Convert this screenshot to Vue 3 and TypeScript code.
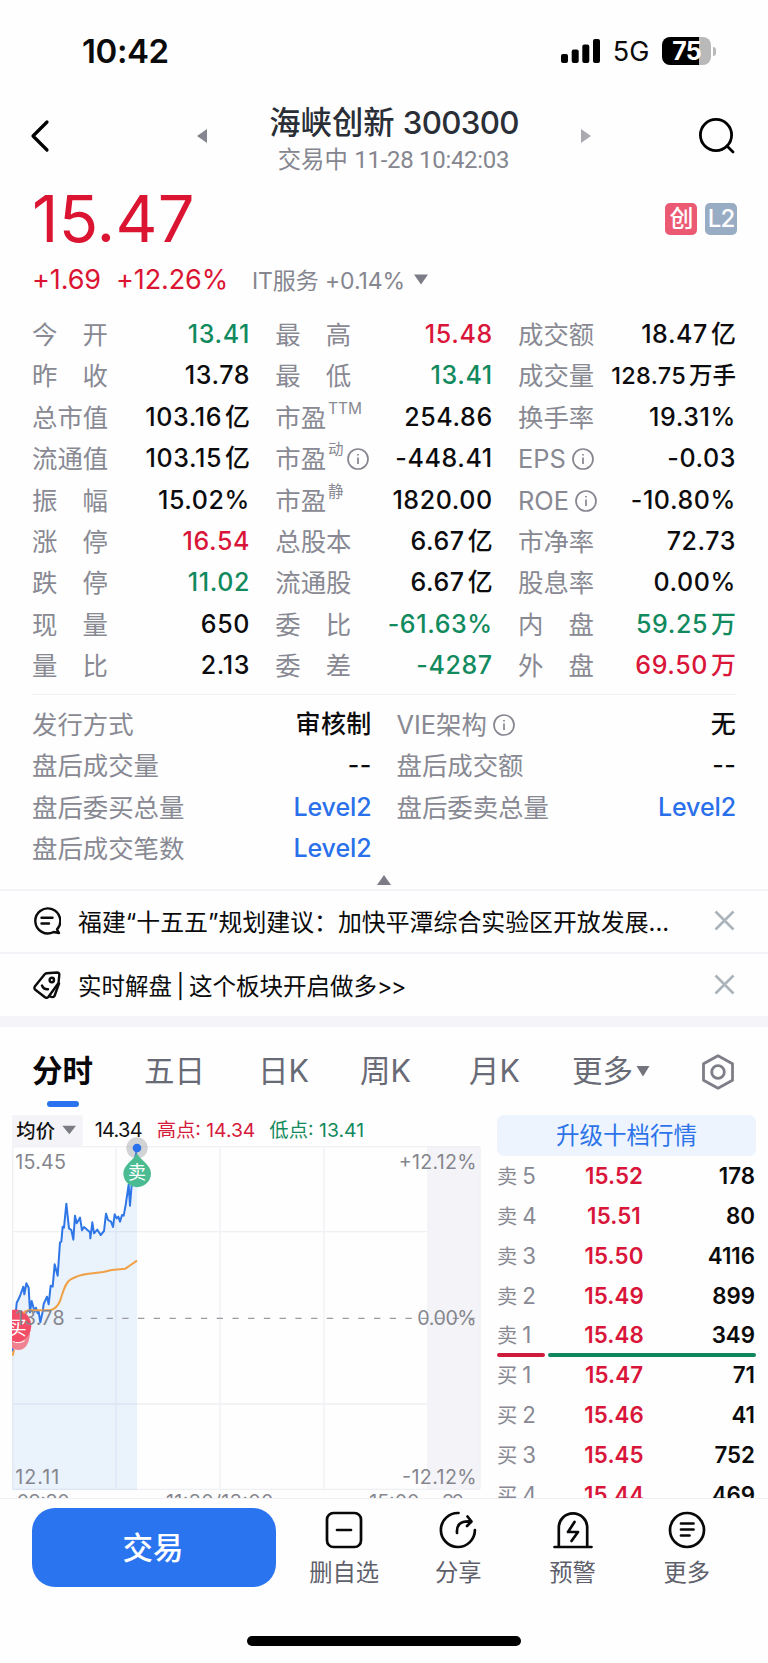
<script setup lang="ts">
type Tone = 'up' | 'down' | 'flat' | 'link'

interface Stat {
  label: string
  value: string
  unit?: string
  sup?: string
  info?: boolean
  tone?: Tone
  small?: boolean
}

interface Level {
  side: string
  price: string
  volume: string
}

const stats: Stat[] = [
  { label: '今开', value: '13.41', tone: 'down' },
  { label: '最高', value: '15.48', tone: 'up' },
  { label: '成交额', value: '18.47', unit: '亿' },
  { label: '昨收', value: '13.78' },
  { label: '最低', value: '13.41', tone: 'down' },
  { label: '成交量', value: '128.75', unit: '万手', small: true },
  { label: '总市值', value: '103.16', unit: '亿' },
  { label: '市盈', sup: 'TTM', value: '254.86' },
  { label: '换手率', value: '19.31%' },
  { label: '流通值', value: '103.15', unit: '亿' },
  { label: '市盈', sup: '动', info: true, value: '-448.41' },
  { label: 'EPS', info: true, value: '-0.03' },
  { label: '振幅', value: '15.02%' },
  { label: '市盈', sup: '静', value: '1820.00' },
  { label: 'ROE', info: true, value: '-10.80%' },
  { label: '涨停', value: '16.54', tone: 'up' },
  { label: '总股本', value: '6.67', unit: '亿' },
  { label: '市净率', value: '72.73' },
  { label: '跌停', value: '11.02', tone: 'down' },
  { label: '流通股', value: '6.67', unit: '亿' },
  { label: '股息率', value: '0.00%' },
  { label: '现量', value: '650' },
  { label: '委比', value: '-61.63%', tone: 'down' },
  { label: '内盘', value: '59.25', unit: '万', tone: 'down' },
  { label: '量比', value: '2.13' },
  { label: '委差', value: '-4287', tone: 'down' },
  { label: '外盘', value: '69.50', unit: '万', tone: 'up' },
]

const extras: Stat[] = [
  { label: '发行方式', value: '审核制' },
  { label: 'VIE架构', info: true, value: '无' },
  { label: '盘后成交量', value: '--' },
  { label: '盘后成交额', value: '--' },
  { label: '盘后委买总量', value: 'Level2', tone: 'link' },
  { label: '盘后委卖总量', value: 'Level2', tone: 'link' },
  { label: '盘后成交笔数', value: 'Level2', tone: 'link' },
]

const tabs: string[] = ['分时', '五日', '日K', '周K', '月K']

const asks: Level[] = [
  { side: '卖5', price: '15.52', volume: '178' },
  { side: '卖4', price: '15.51', volume: '80' },
  { side: '卖3', price: '15.50', volume: '4116' },
  { side: '卖2', price: '15.49', volume: '899' },
  { side: '卖1', price: '15.48', volume: '349' },
]

const bids: Level[] = [
  { side: '买1', price: '15.47', volume: '71' },
  { side: '买2', price: '15.46', volume: '41' },
  { side: '买3', price: '15.45', volume: '752' },
  { side: '买4', price: '15.44', volume: '469' },
]

const pricePoints =
  '38,740 44,660 50,594 60,573 70,545 73,568 79,535 86,548 90,622 95,588 104,620 108,608 113,625 116,620 121,652 128,620 131,597 141,575 146,598 152,542 158,545 164,478 173,512 180,412 184,410 188,365 192,368 199,296 207,370 214,375 220,404 225,332 230,355 240,338 246,376 252,366 270,382 271,400 277,352 282,385 292,374 302,390 312,378 318,326 324,345 333,350 339,366 344,328 350,340 355,335 360,350 366,330 371,332 377,300 386,238 390,302 397,215 404,170 411,128'

const isPair = (label: string): boolean => label.length === 2
</script>

<template>
  <div class="page">
    <header class="status">
      <span class="clock">10:42</span>
      <div class="status-right">
        <svg class="signal" viewBox="0 0 39 24">
          <rect x="0" y="15" width="7" height="9" rx="2" />
          <rect x="10.7" y="10.5" width="7" height="13.5" rx="2" />
          <rect x="21.3" y="5.5" width="7" height="18.5" rx="2" />
          <rect x="32" y="0" width="7" height="24" rx="2" />
        </svg>
        <span class="net">5G</span>
        <div class="battery"><span>75</span></div>
        <i class="nub"></i>
      </div>
    </header>

    <nav class="titlebar">
      <svg class="back" viewBox="0 0 22 34"><path d="M18 3 4 17l14 14" /></svg>
      <i class="tri-left"></i>
      <div class="title">
        <h1>海峡创新 <b>300300</b></h1>
        <p>交易中 <span>11-28 10:42:03</span></p>
      </div>
      <i class="tri-right"></i>
      <svg class="search" viewBox="0 0 38 38"><circle cx="18" cy="18" r="15.6" /><path d="m29 29 6 6" /></svg>
    </nav>

    <section class="quote">
      <div class="quote-top">
        <strong>15.47</strong>
        <div class="badges"><span class="b-red">创</span><span class="b-blue">L2</span></div>
      </div>
      <div class="quote-sub">
        <span class="chg">+1.69</span>
        <span class="pct">+12.26%</span>
        <span class="sector">IT服务 <em>+0.14%</em></span>
        <svg class="caret" viewBox="0 0 16 11"><path d="M1 .5h14L8 10.5z" /></svg>
      </div>
    </section>

    <section class="stats">
      <div v-for="(s, i) in stats" :key="i" class="stat">
        <span class="label" :class="{ pair: isPair(s.label) && !s.sup }"
          >{{ s.label }}<sup v-if="s.sup">{{ s.sup }}</sup
          ><svg v-if="s.info" class="info" :class="{ gap: !s.sup }" viewBox="0 0 22 22"><circle cx="11" cy="11" r="10" /><path d="M11 9.5v6.5M11 6v1.6" /></svg
        ></span>
        <span class="value" :class="[s.tone, { small: s.small }]">{{ s.value }}<i v-if="s.unit">{{ s.unit }}</i></span>
      </div>
    </section>

    <section class="extras">
      <div v-for="s in extras" :key="s.label" class="stat">
        <span class="label">{{ s.label }}<svg v-if="s.info" class="info gap" viewBox="0 0 22 22"><circle cx="11" cy="11" r="10" /><path d="M11 9.5v6.5M11 6v1.6" /></svg></span>
        <span class="value" :class="s.tone">{{ s.value }}</span>
      </div>
    </section>
    <div class="fold"><svg viewBox="0 0 14 10"><path d="M7 0l7 10H0z" /></svg></div>

    <section class="notice">
      <svg class="n-icon" viewBox="0 0 28 28"><path d="M24 22.4A12.5 12.5 0 1 0 20.6 25L26 26Z" /><path d="M8.5 10.7h11M8.5 16.5h7.5" /></svg>
      <span>福建“十五五”规划建议：加快平潭综合实验区开放发展...</span>
      <svg class="close" viewBox="0 0 21 21"><path d="m1.5 1.5 18 18m0-18-18 18" /></svg>
    </section>
    <section class="notice second">
      <svg class="n-icon" viewBox="0 0 28 28">
        <path d="M13.7 2.2 24 1.5q2.5 0 2.3 2.5L25.5 12 15.5 25.8q-1.5 1.7-3.5.5L2.3 18.8q-1.5-1.5-.5-3.2L11.5 3.5q1-1.2 2.2-1.3Z" />
        <circle cx="18.8" cy="9" r="2.2" /><path d="M9 14.5q1.5 4 6 3.7M26 12.5 21.5 25q-1.5 2-4.5.5" />
      </svg>
      <span class="n-two">实时解盘 | 这个板块开启做多<em>&gt;&gt;</em></span>
      <svg class="close" viewBox="0 0 21 21"><path d="m1.5 1.5 18 18m0-18-18 18" /></svg>
    </section>
    <div class="band"></div>

    <nav class="tabs">
      <span v-for="(t, i) in tabs" :key="t" class="tab" :class="{ on: i === 0 }">{{ t }}</span>
      <span class="tab more">更多<svg class="mini" viewBox="0 0 14 12"><path d="M.5 1h13L7 11.5z" /></svg></span>
      <svg class="gear" viewBox="0 0 34 36"><path d="M17 1.8 31.5 9.8v16.4L17 34.2 2.5 26.2V9.8Z" /><circle cx="17" cy="18" r="6.3" /></svg>
    </nav>

    <main class="market">
      <div class="chart-wrap">
        <svg class="chart" viewBox="36 30 1410 1152">
          <rect x="1281" y="124" width="159" height="1031" fill="#f4f4f8" />
          <path class="grid" d="M38 125H1440M38 380H1281M38 897H1281M38 1153H1440M38 125V1153M348 125V1153M660 125V1153M972 125V1153M1440 125V1153" />
          <polygon class="area" :points="`${pricePoints} 411,1155 37,1155 37,740`" />
          <path class="dash" d="M200 640H1430" />
          <rect x="36" y="30" width="212" height="93" rx="6" fill="#f4f4f8" />
          <path d="M187 62h41l-20 26z" fill="#7b7b84" />
          <polyline class="price" :points="pricePoints" />
          <circle cx="411" cy="129" r="32" fill="#8c8f94" opacity=".38" />
          <path d="M411 145C420 166 453 179 453 205A41 41 0 0 1 370 205C370 179 402 166 411 145Z" fill="#4bbb92" />
          <circle cx="411" cy="129" r="13" fill="#2970ec" />
          <path d="M36 630Q78 640 90 685Q86 735 55 735Q42 735 36 730Z" fill="#f08291" />
          <path d="M36 615Q48 611 62 616A50 50 0 0 1 60 710Q48 714 36 711Z" fill="#f34c66" />
          <path d="M38 709q18 9 36-2" fill="none" stroke="#fff" stroke-width="3" />
          <svg x="36" y="600" width="70" height="125" viewBox="0 0 70 125"><text x="-13" y="89" font-size="57" fill="#fff">买</text></svg>
          <path class="average" d="M38 752 42 735M70 625Q76 617 86 616L150 616Q170 612 180 588C190 560 195 532 212 523Q235 510 260 507L310 501 335 495 376 491 392 480 411 467" />
          <text x="411" y="223" font-size="54" fill="#fff" text-anchor="middle">卖</text>
          <text x="49" y="98" font-size="58" font-weight="500" fill="#111">均价</text>
          <text x="284" y="97" font-size="60" fill="#111" textLength="144">14.34</text>
          <text x="470" y="97" font-size="58" fill="#d61a3b" textLength="296">高点: 14.34</text>
          <text x="808" y="97" font-size="58" fill="#12895c" textLength="284">低点: 13.41</text>
          <g class="axis">
            <text x="46" y="191" textLength="152">15.45</text>
            <text x="46" y="661" textLength="148">13.78</text>
            <text x="46" y="1137" textLength="132">12.11</text>
            <text x="1430" y="191" text-anchor="end" textLength="234">+12.12%</text>
            <text x="1430" y="661" text-anchor="end" textLength="178">0.00%</text>
            <text x="1430" y="1137" text-anchor="end" textLength="224">-12.12%</text>
            <text x="50" y="1212" textLength="159">09:30</text>
            <text x="498" y="1212" textLength="322">11:30/13:00</text>
            <text x="1108" y="1212" textLength="150">15:00</text>
            <text x="1326" y="1212" textLength="66">30</text>
          </g>
        </svg>
      </div>
      <aside class="book">
        <div class="upgrade">升级十档行情</div>
        <div v-for="l in asks" :key="l.side" class="level">
          <span class="side">{{ l.side[0] }}<b>{{ l.side[1] }}</b></span><span class="lp">{{ l.price }}</span><span class="lv">{{ l.volume }}</span>
        </div>
        <div class="ratio"><i class="r-up"></i><i class="r-down"></i></div>
        <div v-for="l in bids" :key="l.side" class="level">
          <span class="side">{{ l.side[0] }}<b>{{ l.side[1] }}</b></span><span class="lp">{{ l.price }}</span><span class="lv">{{ l.volume }}</span>
        </div>
      </aside>
    </main>

    <footer class="dock">
      <div class="actions">
        <button class="trade">交易</button>
        <div class="action">
          <svg viewBox="0 0 40 38"><rect x="3" y="2" width="34" height="34" rx="6.5" /><path d="M13 19h14" /></svg>
          <span>删自选</span>
        </div>
        <div class="action">
          <svg viewBox="0 0 40 38"><path d="M20.5 2A17 17 0 1 0 36.9 19M19 22Q18 10 31 10.3M29.5 5.5l4 5-4.5 4.5" /></svg>
          <span>分享</span>
        </div>
        <div class="action">
          <svg viewBox="0 0 40 38"><path d="M1.5 36h37M5.8 36V16.5A14.2 14.2 0 0 1 34.2 16.5V36M21.5 11 15 21h10l-6.5 9" /></svg>
          <span>预警</span>
        </div>
        <div class="action">
          <svg viewBox="0 0 40 38"><circle cx="20" cy="19" r="17" /><path d="M14 12.5h12.5M14 18.5h12.5M14 24.5h8.5" /></svg>
          <span>更多</span>
        </div>
      </div>
      <div class="home"></div>
    </footer>
  </div>
</template>

<style>
body {
  margin: 0;
  background: #fff;
}
</style>

<style scoped>
.page {
  width: 768px;
  height: 1663px;
  overflow: hidden;
  background: #fefefe;
  color: #0b0b0c;
  font-family: Inter, 'Noto Sans CJK SC', sans-serif;
  display: flex;
  flex-direction: column;
}
.page > * {
  flex: none;
  box-sizing: border-box;
}
i,
em {
  font-style: normal;
}
svg {
  display: block;
  fill: none;
  flex: none;
}
.status {
  height: 102px;
  padding: 0 52px 0 82px;
  display: flex;
  align-items: center;
  justify-content: space-between;
}
.clock {
  font-size: 33px;
  font-weight: 600;
  letter-spacing: -0.4px;
}
.status-right {
  display: flex;
  align-items: center;
}
.signal {
  width: 39px;
  height: 24px;
  fill: #000;
}
.net {
  width: 62px;
  text-align: center;
  font-size: 27px;
  line-height: 32px;
  padding-top: 2px;
}
.battery {
  width: 49px;
  height: 28px;
  border-radius: 8px;
  background: linear-gradient(90deg, #000 75%, #b9b9ba 75%);
  color: #fff;
  font-size: 25px;
  line-height: 28px;
  font-weight: 700;
  text-align: center;
  letter-spacing: -1px;
}
.nub {
  width: 3px;
  height: 9px;
  margin-left: 2px;
  border-radius: 0 5px 5px 0;
  background: #b9b9ba;
}
.titlebar {
  height: 78px;
  padding: 0 32px 10px 29px;
  display: flex;
  align-items: center;
}
.back {
  width: 22px;
  height: 34px;
  stroke: #000;
  stroke-width: 3.2;
  stroke-linecap: round;
  stroke-linejoin: round;
}
.tri-left {
  margin-left: 146px;
  border: 7px solid transparent;
  border-left: 0;
  border-right: 10px solid #85858f;
}
.title {
  width: 374px;
  padding-top: 8px;
  text-align: center;
  white-space: nowrap;
}
h1 {
  margin: 0;
  font-size: 31.3px;
  line-height: 40px;
  font-weight: 500;
  color: #2a2f37;
}
h1 b {
  font-weight: 500;
  letter-spacing: -0.7px;
}
.title p {
  margin: 0 0 0 -1px;
  font-size: 23.3px;
  line-height: 34px;
  color: #85868f;
}
.title p span {
  font-family: Roboto, sans-serif;
  font-size: 24px;
  letter-spacing: -0.3px;
}
.tri-right {
  border: 7px solid transparent;
  border-right: 0;
  border-left: 10px solid #aaaab0;
}
.search {
  width: 38px;
  height: 38px;
  margin-left: auto;
  stroke: #000;
  stroke-width: 2.8;
  stroke-linecap: round;
}
.quote {
  height: 134px;
  padding: 0 31px 0 32px;
}
.quote-top {
  height: 79px;
  display: flex;
  justify-content: space-between;
}
.quote-top strong {
  font-size: 65px;
  line-height: 78px;
  font-weight: 400;
  letter-spacing: 0.2px;
  color: #db1432;
}
.badges {
  margin-top: 23px;
  display: flex;
  gap: 8px;
}
.badges span {
  width: 32px;
  height: 32px;
  border-radius: 5px;
  color: #fff;
  font-size: 24px;
  line-height: 32px;
  text-align: center;
  font-weight: 500;
  letter-spacing: -1px;
}
.b-red {
  background: #eb5973;
}
.b-blue {
  background: #98acc3;
}
.quote-sub {
  height: 40px;
  display: flex;
  align-items: center;
  white-space: nowrap;
  color: #db1432;
  font-size: 27px;
  letter-spacing: -0.1px;
}
.chg {
  width: 84px;
}
.pct {
  width: 136px;
}
.sector {
  color: #85868f;
  font-size: 23px;
}
.caret {
  width: 16px;
  height: 11px;
  margin-left: 8px;
  fill: #7c7c86;
}
.stats {
  height: 381px;
  margin: 0 32px 0 32px;
  display: grid;
  grid-template-columns: 218px 217.5px 218px;
  column-gap: 25.25px;
  grid-auto-rows: 41.4px;
  border-bottom: 1px solid #f0f0f4;
}
.stat {
  display: flex;
  justify-content: space-between;
  line-height: 41px;
  white-space: nowrap;
}
.label {
  display: flex;
  font-size: 25.4px;
  font-weight: 400;
  color: #888993;
}
.stats .label.pair {
  width: 76px;
  display: block;
  text-align: justify;
  text-align-last: justify;
  text-justify: inter-character;
}
sup {
  margin-left: 2px;
  font-size: 15.5px;
  line-height: 24px;
}
.info {
  width: 22px;
  height: 22px;
  margin: 10px 0 0 3px;
  stroke: #85868f;
  stroke-width: 1.7;
}
.info.gap {
  margin-left: 6px;
}
.value {
  font-size: 25px;
  font-weight: 500;
  letter-spacing: 0.6px;
  color: #0c0c0e;
}
.value i {
  margin-left: 3px;
  letter-spacing: 0;
}
.value.small {
  font-size: 23.5px;
  letter-spacing: 0.3px;
}
.value.up {
  color: #d9163a;
}
.value.down {
  color: #118a5e;
}
.value.link {
  color: #2a70ea;
  letter-spacing: -0.1px;
}
.extras {
  height: 179px;
  margin: 0 32px 0 32px;
  padding-top: 9px;
  display: grid;
  grid-template-columns: 339.5px 339.5px;
  column-gap: 25px;
  grid-auto-rows: 41.3px;
}
.extras .value:not(.link) {
  letter-spacing: 0.3px;
}
.fold {
  height: 17px;
  border-bottom: 2px solid #f4f4f8;
}
.fold svg {
  width: 14px;
  height: 10px;
  margin: 1px auto 0;
  fill: #7c7c86;
}
.notice {
  height: 63px;
  padding: 0 33px 2px 33px;
  display: flex;
  align-items: center;
  border-bottom: 2px solid #f4f4f8;
  font-size: 23.9px;
  white-space: nowrap;
}
.notice.second {
  height: 62px;
  padding-bottom: 1px;
  border: 0;
}
.notice span {
  margin-left: 17px;
}
.n-two {
  font-size: 23.5px;
  word-spacing: -2px;
}
.n-two em {
  font-size: 23px;
  letter-spacing: -1.2px;
}
.n-icon {
  width: 28px;
  height: 28px;
  stroke: #0b0b0c;
  stroke-width: 2.4;
  stroke-linecap: round;
  stroke-linejoin: round;
}
.close {
  width: 21px;
  height: 21px;
  margin-left: auto;
  stroke: #aab4ba;
  stroke-width: 2.6;
}
.band {
  height: 11px;
  background: #f4f4f9;
}
.tabs {
  height: 88px;
  padding: 0 33px 0 32px;
  display: flex;
  color: #686a75;
}
.tab {
  position: relative;
  height: 80px;
  font-size: 30.5px;
  line-height: 88px;
  margin-right: 51px;
  white-space: nowrap;
}
.tab:nth-child(2) {
  margin-right: 53px;
}
.tab:nth-child(4) {
  margin-right: 58px;
}
.tab.on {
  color: #08080a;
  font-weight: 600;
}
.tab.on::after {
  content: '';
  position: absolute;
  left: 15px;
  bottom: 0;
  width: 32px;
  height: 6px;
  border-radius: 3px;
  background: #2b73ee;
}
.tab.more {
  margin: 0 0 0 1px;
  display: flex;
}
.mini {
  width: 14px;
  height: 12px;
  margin: 38px 0 0 3px;
  fill: #74747e;
}
.gear {
  width: 34px;
  height: 36px;
  margin: 27px 0 0 auto;
  stroke: #7d7e87;
  stroke-width: 2.8;
  stroke-linejoin: round;
}
.market {
  height: 383px;
  overflow: hidden;
  padding: 0 12px;
  display: flex;
  justify-content: space-between;
}
.chart-wrap,
.chart {
  width: 470px;
  height: 384px;
}
.grid {
  stroke: #eff0f4;
  stroke-width: 4;
}
.area {
  fill: #5c9cee;
  fill-opacity: 0.12;
}
.price {
  stroke: #2f76e6;
  stroke-width: 6;
  stroke-linejoin: round;
}
.average {
  stroke: #f0a045;
  stroke-width: 6;
}
.dash {
  stroke: #9b9ca1;
  stroke-width: 4;
  stroke-dasharray: 19 28.2;
  stroke-dashoffset: 22;
}
.axis {
  fill: #85868d;
  font-size: 59px;
}
.book {
  width: 259px;
}
.upgrade {
  height: 41px;
  border-radius: 7px;
  background: #edf4fd;
  color: #2d74ea;
  font-size: 23.5px;
  line-height: 41px;
  text-align: center;
}
.level {
  height: 39.85px;
  padding-right: 1px;
  line-height: 39.5px;
  display: grid;
  grid-template-columns: 78px 78px 1fr;
  font-size: 22.3px;
  font-weight: 600;
}
.side {
  font-size: 20.3px;
  font-weight: 400;
  color: #888993;
}
.side b {
  margin-left: 5px;
  font-size: 22.3px;
  font-weight: 400;
}
.lp {
  color: #d9163a;
  text-align: center;
  letter-spacing: 0.1px;
}
.lv {
  text-align: right;
}
.ratio {
  height: 4px;
  margin: -2px 0 -2px;
  display: flex;
  gap: 3px;
}
.r-up {
  width: 48px;
  border-radius: 2px;
  background: #cf1c3c;
}
.r-down {
  flex: 1;
  border-radius: 2px;
  background: #10865d;
}
.dock {
  height: 165px;
  border-top: 1px solid #f1f1f5;
  display: flex;
  flex-direction: column;
  align-items: center;
}
.actions {
  width: 100%;
  box-sizing: border-box;
  padding: 9px 24px 0 32px;
  display: flex;
}
.trade {
  width: 244px;
  height: 79px;
  margin: 0 11px 0 0;
  padding: 1px 2px 0 0;
  border: 0;
  border-radius: 23px;
  background: #2b74f0;
  color: #fff;
  font: 500 30.5px/78px Inter, 'Noto Sans CJK SC', sans-serif;
}
.action {
  width: 114.3px;
  display: flex;
  flex-direction: column;
  align-items: center;
  color: #5e606c;
  font-size: 23.3px;
}
.action svg {
  width: 40px;
  height: 38px;
  margin-top: 3px;
  stroke: #08080a;
  stroke-width: 2.7;
  stroke-linecap: round;
  stroke-linejoin: round;
}
.action span {
  line-height: 34px;
  margin-top: 7px;
}
.home {
  width: 274px;
  height: 10px;
  margin-top: 46px;
  border-radius: 5px;
  background: #000;
}
</style>
